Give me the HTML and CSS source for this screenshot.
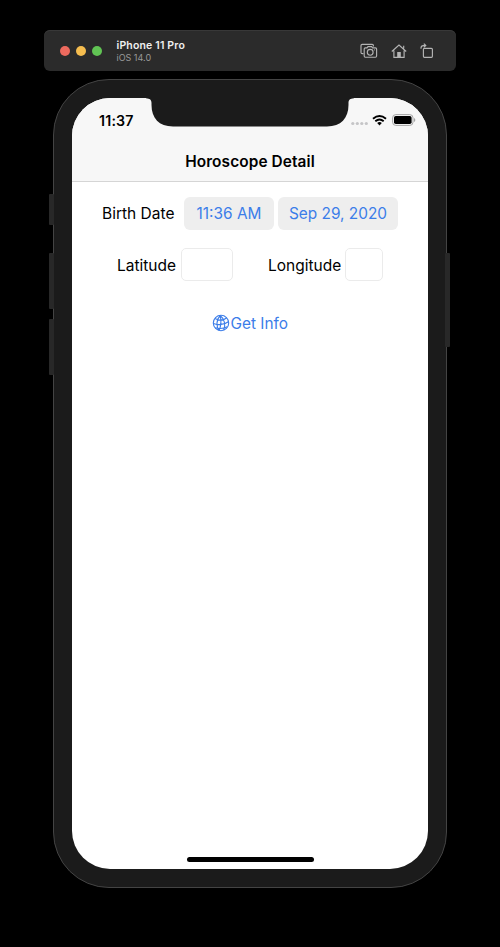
FILE: index.html
```html
<!DOCTYPE html>
<html lang="en">
<head>
<meta charset="utf-8">
<title>Horoscope Detail</title>
<link rel="stylesheet" href="styles.css">
</head>
<body>
<header class="toolbar">
  <div class="lights"><i class="red"></i><i class="yellow"></i><i class="green"></i></div>
  <div class="device"><strong>iPhone 11 Pro</strong><span>iOS 14.0</span></div>
  <div class="tools">
    <svg width="18" height="16" viewBox="0 0 18 16"><path d="M3.3 10.6H2.2Q1 10.6 1 9.4V2.6Q1 1.4 2.2 1.4H12.2Q13.4 1.4 13.4 2.6V3.4M5.4 4.8H7L8 3.6H11.6L12.6 4.8H15.4Q16.6 4.8 16.6 6V13Q16.6 14.2 15.4 14.2H5.4Q4.2 14.2 4.2 13V6Q4.2 4.8 5.4 4.8Z"/><circle cx="10.2" cy="9.3" r="2.9"/><path d="M14.3 6.9H15"/></svg>
    <svg width="16" height="16" viewBox="0 0 16 16"><path d="M.8 8.5 8 2l7.2 6.5M2.9 7.5V14.3H13.1V7.5M12.7 5.6V2.8"/><path class="fill" d="M6.2 14.5V9H9.8V14.5Z"/></svg>
    <svg width="14" height="16" viewBox="0 0 14 16"><rect x="3.4" y="5.3" width="9" height="9" rx="1"/><path d="M1 5.8V5Q1 2.6 3.4 2.6H5.4M3.8.6 5.8 2.6 3.8 4.4"/></svg>
  </div>
</header>
<main class="phone">
  <b class="key mute"></b><b class="key up"></b><b class="key down"></b><b class="key power"></b>
  <section class="screen">
    <svg class="notch" width="208" height="30" viewBox="0 0 208 30"><path d="M0 0H208V.3C204 .5 202.5 2 202.5 5V7C202.5 20 195 28.5 181 28.5H27C13 28.5 5.5 20 5.5 7V5C5.5 2 4 .5 0 .3Z"/></svg>
    <div class="navbar">
      <div class="status">
        <span class="clock">11:37</span>
        <div class="signals">
          <svg width="17" height="5" viewBox="0 0 17 5"><g fill="#c5c5c7"><circle cx="1.8" cy="2.5" r="1.6"/><circle cx="6.3" cy="2.5" r="1.6"/><circle cx="10.8" cy="2.5" r="1.6"/><circle cx="15.3" cy="2.5" r="1.6"/></g></svg>
          <svg class="wifi" width="15" height="11" viewBox="0 0 15 11"><path d="M1 3.8Q7.5-1.7 14 3.8M3.3 6.2Q7.5 2.7 11.7 6.2" fill="none" stroke="#000" stroke-width="1.9"/><path d="M5.2 8Q7.5 6.2 9.8 8L7.5 10.4Z"/></svg>
          <svg width="24" height="12" viewBox="0 0 24 12"><rect x=".6" y=".6" width="20.4" height="10.8" rx="3.2" fill="none" stroke="#a5a5a5" stroke-width="1"/><rect x="2" y="2" width="17.6" height="8" rx="1.8"/><path d="M22 4Q23.3 4.5 23.3 6T22 8Z" fill="#a5a5a5"/></svg>
        </div>
      </div>
      <h1>Horoscope Detail</h1>
    </div>
    <div class="row dates"><span class="birth">Birth Date</span><button class="time"><span>11:36 AM</span></button><button class="date"><span>Sep 29, 2020</span></button></div>
    <div class="row coords"><label class="lat">Latitude</label><input class="lat-input" aria-label="Latitude"><label class="lon">Longitude</label><input class="lon-input" aria-label="Longitude"></div>
    <a class="info"><svg width="18" height="18" viewBox="0 0 18 18"><circle cx="9" cy="9" r="7.7"/><path d="M8.2 1.5C4 6 4.2 12 7 16.4M8.2 1.5C12.5 5 13.8 11 11.8 16M8.2 1.5C9.4 7 9.2 12 7 16.4M3 4.5Q9 8 14.6 4M1.5 9.4Q10 12.5 16.4 7.8M3.3 13.8Q10 15.5 15.2 12.8"/></svg><span>Get Info</span></a>
    <div class="home"></div>
  </section>
</main>
</body>
</html>
```
FILE: styles.css
```css
* { box-sizing: border-box; }
body { margin: 0; width: 500px; height: 947px; padding-top: 30px; background: #000; font-family: Inter, sans-serif; overflow: hidden; }
.toolbar { display: flex; align-items: center; width: 412px; height: 41px; margin-left: 44px; padding: 0 22px 0 16px; background: #2b2b2b; border-radius: 6px; box-shadow: inset 0 1px #383838; }
.lights { display: flex; gap: 6px; }
.lights i { width: 10px; height: 10px; border-radius: 50%; }
.red { background: #ed6a5e; }
.yellow { background: #f5bd4f; }
.green { background: #61c454; }
.device { display: flex; flex-direction: column; margin: 2px 0 0 14.5px; color: #999; white-space: nowrap; }
.device strong { color: #f0f0f0; font-size: 10.5px; line-height: 12px; font-weight: 600; letter-spacing: .17px; }
.device span { font-size: 9px; line-height: 11px; letter-spacing: 0; }
.tools { display: flex; gap: 13px; margin-left: auto; }
.tools svg { fill: none; stroke: #b4b4b4; stroke-width: 1.15; }
.tools .fill { fill: #b4b4b4; stroke: none; }
.phone { position: relative; width: 394px; height: 809px; margin: 8px 0 0 53px; padding: 18px; background: #1b1b1b; border: 1px solid #444; border-radius: 56px; }
.key { position: absolute; background: #282828; border-radius: 1px; }
.mute { left: -5px; top: 114px; width: 5px; height: 31px; }
.up { left: -5px; top: 173px; width: 5px; height: 56px; }
.down { left: -5px; top: 239px; width: 5px; height: 56px; }
.power { right: -4px; top: 173px; width: 5px; height: 94px; }
.screen { position: relative; display: flex; flex-direction: column; width: 356px; height: 771px; background: #fff; border-radius: 38px; overflow: hidden; color: #000; }
.notch { position: absolute; left: 74px; top: 0; fill: #1b1b1b; }
.navbar { height: 84px; background: #f7f7f7; border-bottom: 1px solid #d5d5d5; }
.status { display: flex; justify-content: space-between; align-items: center; height: 44px; padding: 0 13px 0 27px; }
.clock { font-size: 14.2px; font-weight: 600; letter-spacing: .2px; }
.signals { display: flex; align-items: center; }
.signals svg:first-child { margin: 7px 4px 0 0; }
.wifi { margin-right: 5px; }
.signals svg:last-child { margin-right: -1px; }
h1 { margin: 9px 0 0; font-size: 15.4px; line-height: 22px; font-weight: 600; letter-spacing: .1px; text-align: center; white-space: nowrap; }
.row { display: flex; align-items: center; height: 33px; font-size: 15.5px; white-space: nowrap; }
.dates { margin: 15px 0 0 30px; }
.birth { width: 82px; }
button { height: 33px; border: 0; border-radius: 6px; padding: 0; background: #eee; color: #3b7de9; font: 15.4px Inter, sans-serif; white-space: nowrap; }
.time { width: 90px; margin-right: 4px; }
.date { width: 120px; }
.coords { margin: 18px 0 0 45px; }
label { padding-top: 1px; }
.lat { width: 64px; }
.lat-input { width: 52px; }
.lon { width: 77px; margin-left: 35px; }
.lon-input { width: 38px; }
input { height: 33px; padding: 0; border: 1px solid #ebebeb; border-radius: 5px; background: #fff; }
.info { display: flex; align-items: center; height: 22px; margin: 31px 0 0 140px; color: #3b7de9; font-size: 15.4px; white-space: nowrap; }
.info svg { fill: none; stroke: #3b7de9; stroke-width: 1.1; margin-right: .5px; }
.home { width: 127px; height: 5px; margin: auto auto 7px 115px; background: #000; border-radius: 3px; }
```
